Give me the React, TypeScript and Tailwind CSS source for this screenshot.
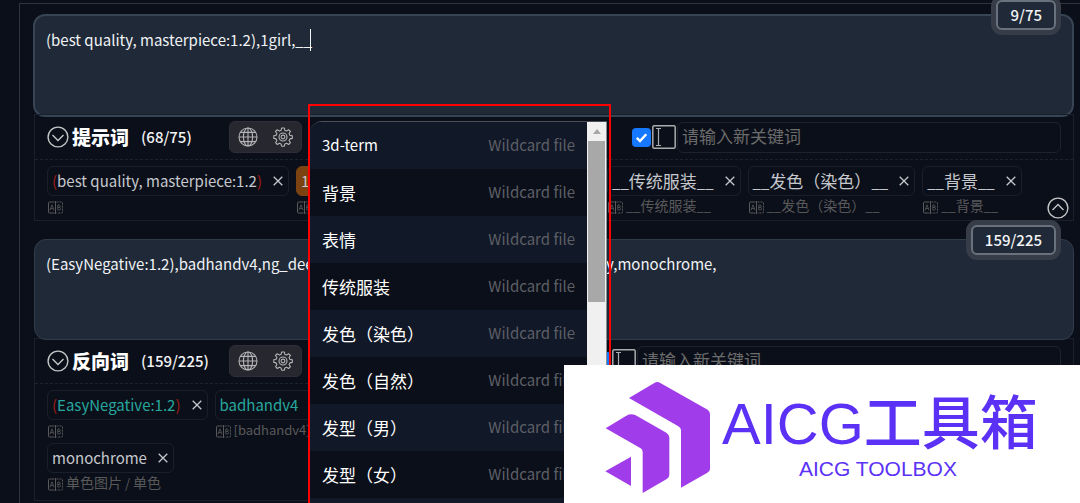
import { useState } from "react";
import type { ReactNode } from "react";

const wildcards = ["3d-term", "背景", "表情", "传统服装", "发色（染色）", "发色（自然）", "发型（男）", "发型（女）"];

function CircleChevron({ up = false }: { up?: boolean }) {
  return (
    <svg className="w-[22px] h-[22px]" viewBox="0 0 22 22" fill="none" stroke="currentColor" strokeWidth="1.4" aria-hidden="true">
      <circle cx="11" cy="11" r="9.9" />
      <path d={up ? "M5.5 13 11 7.5 16.5 13" : "M5.5 9 11 14.5 16.5 9"} />
    </svg>
  );
}

function GlobeIcon() {
  return (
    <svg className="w-5 h-5" viewBox="0 0 20 20" fill="none" stroke="currentColor" strokeWidth="1.1" aria-hidden="true">
      <circle cx="10" cy="10" r="9" />
      <ellipse cx="10" cy="10" rx="4.6" ry="9" />
      <path d="M10 1v18M1 10h18M2.4 5.4h15.2M2.4 14.6h15.2" />
    </svg>
  );
}

function GearIcon() {
  return (
    <svg className="w-5 h-5" viewBox="0 0 20 20" fill="none" stroke="currentColor" strokeWidth="1.1" strokeLinejoin="round" aria-hidden="true">
      <path d="M8.6 1h2.8l.4 2.3 1.8.8 2-1.4 1.8 1.8-1.3 2 .8 1.9 2.4.4v2.6l-2.4.5-.8 1.8 1.4 2-1.9 1.8-2-1.3-1.8.7-.4 2.3H8.6l-.5-2.3-1.8-.7-2 1.3-1.8-1.8 1.3-2-.7-1.8L.8 11.4V8.8l2.3-.5.8-1.8-1.4-2 1.8-1.8 2 1.4 1.8-.8z" />
      <circle cx="10" cy="10" r="4" />
      <circle cx="10" cy="10" r="1.9" />
    </svg>
  );
}

function TranslateIcon() {
  return (
    <svg className="w-[15px] h-[13px] shrink-0" viewBox="0 0 15 13" fill="none" stroke="currentColor" aria-hidden="true">
      <path d="M6.5 1H1.5Q.5 1 .5 2v9q0 1 1 1h5M7.5 0v13" />
      <path d="M8.5 1h5q1 0 1 1v9q0 1-1 1h-5" strokeDasharray="2 1" />
      <path d="M2 9.3 4 3.8 6 9.3M2.7 7.5h2.6M9.8 4v5h1.5q1.2 0 1.2-1.3T11.3 6.4H9.8h1.3q1.1 0 1.1-1.2T11.1 4z" strokeWidth=".8" />
    </svg>
  );
}

function CloseIcon() {
  return (
    <svg className="w-[10px] h-[10px]" viewBox="0 0 10 10" stroke="currentColor" strokeWidth="1.3" aria-hidden="true">
      <path d="M.7.7l8.6 8.6M9.3.7.7 9.3" />
    </svg>
  );
}

function CursorBox() {
  return (
    <svg className="w-6 h-6" viewBox="0 0 24 24" fill="none" stroke="currentColor" aria-hidden="true">
      <rect x=".8" y=".8" width="22.4" height="22.4" rx="1.5" strokeWidth="1.5" />
      <path d="M4 3.5h5M4 20.5h5M6.5 3.5v17" strokeWidth="1.2" />
    </svg>
  );
}

// Chinese runs are set a little larger than the latin text beside them
function Mixed({ text, size = "text-[17px]" }: { text: string; size?: string }) {
  return (
    <>
      {text.split(/([\u2e80-\uffff]+)/).filter(Boolean).map((part, i) =>
        /[\u2e80-\uffff]/.test(part) ? <span key={i} className={size}>{part}</span> : part
      )}
    </>
  );
}

type PromptBoxProps = { label: string; value: string; count: string; focused?: boolean };

function PromptBox({ label, value, count, focused }: PromptBoxProps) {
  return (
    <div className="relative">
      <textarea
        aria-label={label}
        defaultValue={value}
        spellCheck={false}
        className={
          "block w-full resize-none overflow-hidden rounded-xl bg-[#1f2937] px-[11px] py-3 text-[15px] leading-6 text-[#f0f2f5] outline-none " +
          (focused ? "h-[103px] border-2 border-[#374454]" : "h-[101px] border border-[#313c4b]")
        }
      />
      {focused && <span className="absolute left-[277px] top-[15px] h-[22px] w-px bg-gray-100" />}
      <div className="absolute right-[18px] -top-[14px] rounded-md border-2 border-[#68717c] bg-[#1f2937] px-3 text-[15px] leading-[26px] font-medium text-gray-100 ring-[5px] ring-[#363d49]">
        {count}
      </div>
    </div>
  );
}

function Toolbar({ title, count, inputPlace }: { title: string; count: string; inputPlace: string }) {
  const [enabled, setEnabled] = useState(true);
  return (
    <div className="flex items-center border-b border-dashed border-[#1c222e] h-[45px] px-3">
      <button type="button" aria-label="收起" className="text-[#c4c5c7]">
        <CircleChevron />
      </button>
      <h2 className="ml-[3px] w-[57px] text-[19px] leading-6 font-black text-white whitespace-nowrap">{title}</h2>
      <span className="ml-3 w-[88px] shrink-0 text-[15px] font-medium text-gray-100">{count}</span>
      <div className="flex h-8 w-[73px] shrink-0 items-center justify-between rounded-md bg-[#26272f] border border-[#2d2e37] px-2 text-[#b4b4b4]">
        <button type="button" aria-label="语言"><GlobeIcon /></button>
        <button type="button" aria-label="设置"><GearIcon /></button>
      </div>
      <div className={"flex flex-1 items-center " + inputPlace}>
        <label className="relative block w-[19px] h-[19px] shrink-0">
          <input
            type="checkbox"
            aria-label="启用输入"
            checked={enabled}
            onChange={() => setEnabled(!enabled)}
            className="block appearance-none w-[19px] h-[19px] rounded bg-gray-700 checked:bg-[#1677ff]"
          />
          {enabled && (
            <svg className="pointer-events-none absolute inset-0 w-[19px] h-[19px]" viewBox="0 0 19 19" fill="none" stroke="white" strokeWidth="2.4" aria-hidden="true">
              <path d="M4.8 9.8l3.2 3.2 6.3-6.8" />
            </svg>
          )}
        </label>
        <span className="ml-px shrink-0 text-[#aaacae]"><CursorBox /></span>
        <input
          aria-label="请输入新关键词"
          placeholder="请输入新关键词"
          className="ml-px h-[31px] min-w-0 flex-1 rounded-md border border-[#1c222e] bg-transparent px-1 pb-1 text-[17px] text-gray-200 placeholder:text-[#6c6c6c] outline-none"
        />
      </div>
    </div>
  );
}

type TagProps = { children: ReactNode; note?: string; tone?: string; place?: string };

function Tag({ children, note, tone = "border-[#1a202b] text-[#c5c8cd]", place = "" }: TagProps) {
  return (
    <li className={"shrink-0 " + place}>
      <div className={"flex h-[30px] items-center justify-between gap-[11px] rounded-md border pl-1 pr-[5px] text-[15px] leading-7 whitespace-nowrap " + tone}>
        <span>{children}</span>
        <button type="button" aria-label="删除" className="text-[#c5c8cd]"><CloseIcon /></button>
      </div>
      <div className="flex h-[23px] items-center gap-[3px] pl-px text-[13px] leading-5 whitespace-nowrap text-[#59595b]">
        <TranslateIcon />
        {note && <span className="pb-1"><Mixed text={note} size="text-sm" /></span>}
      </div>
    </li>
  );
}

function Weighted({ children }: { children: ReactNode }) {
  return (
    <>
      <span className="text-[#a11d18]">(</span>{children}<span className="text-[#a11d18]">)</span>
    </>
  );
}

function WildcardMenu() {
  return (
    <div className="absolute left-[308px] top-[104px] -bottom-4 w-[303px] border-2 border-[#fe0000] pr-[2px] pt-[15px]">
      <div className="flex h-full overflow-hidden rounded-tl-xl border-t border-[#4a4f59]">
        <ul className="flex-1 bg-[#111827]">
          {wildcards.map((name) => (
            <li key={name} className="even:bg-[#0b0f19]">
              <button type="button" className="flex h-[47px] w-full items-center justify-between px-3 text-[15px]">
                <span className="text-white"><Mixed text={name} /></span>
                <span className="text-[#5d5f66]">Wildcard file</span>
              </button>
            </li>
          ))}
        </ul>
        <div className="w-5 bg-[#f0f0f0] border-r border-[#8b8f96]">
          <div className="flex h-[19px] items-center justify-center">
            <svg className="w-2 h-[5px]" viewBox="0 0 8 5" fill="#a6a6a6" aria-hidden="true"><path d="M0 5 4 0l4 5z" /></svg>
          </div>
          <div className="mx-px h-[161px] bg-[#a8a8a8]" />
        </div>
      </div>
    </div>
  );
}

function BrandBanner() {
  return (
    <div className="absolute bottom-0 right-0 flex h-[138px] w-[516px] bg-white pl-[41px] pt-4">
      <svg className="w-[106px] h-[113px] shrink-0" viewBox="134 64 318 339" fill="#a03ce9" aria-hidden="true">
        <path d="M206 115 282 70Q291 64 300 70L442 150Q449 155 449 163V328Q449 335 441 339L362 384V212Q362 204 354 200Z" />
        <path d="M136 206 198 168Q212 160 226 167L318 219Q327 225 327 234V344Q327 354 318 359L247 400V276Q247 270 241 266Z" />
        <path d="M135 335 212 291V379Z" />
      </svg>
      <div className="ml-[11px] mt-3 flex flex-col text-[#5b32f5] whitespace-nowrap [font-family:'Liberation_Sans','Noto_Sans_CJK_SC',sans-serif]">
        <span className="text-[58px] leading-[62px]">
          AICG<span className="font-medium">工具箱</span>
        </span>
        <span className="pl-[77px] text-[21px] leading-7">AICG TOOLBOX</span>
      </div>
    </div>
  );
}

export default function App() {
  return (
    <div className="relative h-screen overflow-hidden bg-[#0b0f19] pl-[19px] pt-[3px] [font-family:'Noto_Sans_CJK_SC',sans-serif]">
      <main className="h-full border-l border-t border-[#30343d] pl-[13px] pr-[6px] pt-[10px]">
        <section>
          <PromptBox label="提示词" value="(best quality, masterpiece:1.2),1girl,__" count="9/75" focused />
          <div className="relative ml-px -mt-[3px] h-[107px] border border-[#1a202b]">
            <Toolbar title="提示词" count="(68/75)" inputPlace="ml-[330px]" />
            <ul className="flex gap-[7px] px-3 pt-[6px]">
              <Tag><Weighted>best quality, masterpiece:1.2</Weighted></Tag>
              <Tag place="w-[304px]" tone="border-[#7c4210] bg-[#7c4210] text-[#c5c8cd]">1girl</Tag>
              <Tag note="__传统服装__"><Mixed text="__传统服装__" /></Tag>
              <Tag note="__发色（染色）__"><Mixed text="__发色（染色）__" /></Tag>
              <Tag note="__背景__"><Mixed text="__背景__" /></Tag>
            </ul>
            <button type="button" aria-label="折叠" className="absolute right-1 bottom-[1px] text-[#c4c5c7]">
              <CircleChevron up />
            </button>
          </div>
        </section>

        <section className="mt-[18px] pl-px">
          <PromptBox
            label="反向词"
            value="(EasyNegative:1.2),badhandv4,ng_deepnegative_v1_75t,worst quality,low quality,monochrome,"
            count="159/225"
          />
          <div className="-mt-[2px] border border-[#1a202b]">
            <Toolbar title="反向词" count="(159/225)" inputPlace="ml-[290px]" />
            <ul className="flex flex-wrap gap-x-[7px] px-3 pt-[6px] pb-1">
              <Tag tone="border-[#1a202b] text-[#27a79e]"><Weighted>EasyNegative:1.2</Weighted></Tag>
              <Tag tone="border-[#1a202b] text-[#27a79e]" place="w-3/4" note="[badhandv4]">badhandv4</Tag>
              <Tag note="单色图片 / 单色">monochrome</Tag>
            </ul>
          </div>
        </section>
      </main>

      <WildcardMenu />
      <BrandBanner />
    </div>
  );
}
